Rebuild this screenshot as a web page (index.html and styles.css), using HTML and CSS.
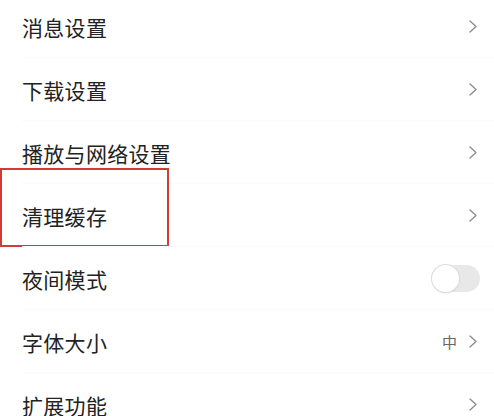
FILE: index.html
```html
<!DOCTYPE html>
<html lang="zh">
<head>
<meta charset="utf-8">
<link rel="stylesheet" href="styles.css">
</head>
<body>
<div class="list">
  <div class="row"><span class="label">消息设置</span><span class="right"><svg class="chev" viewBox="0 0 8 13" width="8" height="13"><path d="M1 1 L7 6.5 L1 12" fill="none" stroke="#8a8a8a" stroke-width="1.3" stroke-linecap="round" stroke-linejoin="round"/></svg></span></div>
  <div class="row"><span class="label">下载设置</span><span class="right"><svg class="chev" viewBox="0 0 8 13" width="8" height="13"><path d="M1 1 L7 6.5 L1 12" fill="none" stroke="#8a8a8a" stroke-width="1.3" stroke-linecap="round" stroke-linejoin="round"/></svg></span></div>
  <div class="row"><span class="label">播放与网络设置</span><span class="right"><svg class="chev" viewBox="0 0 8 13" width="8" height="13"><path d="M1 1 L7 6.5 L1 12" fill="none" stroke="#8a8a8a" stroke-width="1.3" stroke-linecap="round" stroke-linejoin="round"/></svg></span></div>
  <div class="row highlighted"><span class="label">清理缓存</span><span class="right"><svg class="chev" viewBox="0 0 8 13" width="8" height="13"><path d="M1 1 L7 6.5 L1 12" fill="none" stroke="#8a8a8a" stroke-width="1.3" stroke-linecap="round" stroke-linejoin="round"/></svg></span><div class="mark"></div></div>
  <div class="row"><span class="label">夜间模式</span><span class="right"><span class="toggle"><span class="knob"></span></span></span></div>
  <div class="row"><span class="label">字体大小</span><span class="right"><span class="value">中</span><svg class="chev" viewBox="0 0 8 13" width="8" height="13"><path d="M1 1 L7 6.5 L1 12" fill="none" stroke="#8a8a8a" stroke-width="1.3" stroke-linecap="round" stroke-linejoin="round"/></svg></span></div>
  <div class="row last"><span class="label">扩展功能</span><span class="right"><svg class="chev" viewBox="0 0 8 13" width="8" height="13"><path d="M1 1 L7 6.5 L1 12" fill="none" stroke="#8a8a8a" stroke-width="1.3" stroke-linecap="round" stroke-linejoin="round"/></svg></span></div>
</div>
</body>
</html>
```
FILE: styles.css
```css
html, body {
  margin: 0;
  padding: 0;
  background: #ffffff;
  overflow: hidden;
}
body {
  width: 494px;
  height: 416px;
  font-family: "Noto Sans CJK SC", "Noto Sans", sans-serif;
}
.list {
  margin-top: -5px;
}
.row {
  position: relative;
  height: 63px;
  display: flex;
  align-items: center;
  justify-content: space-between;
  padding: 0 17px 0 22px;
  box-sizing: border-box;
}
.row::after {
  content: "";
  position: absolute;
  left: 22px;
  right: 0;
  bottom: 0;
  height: 1px;
  background: #fafafa;
}
.row.last::after {
  display: none;
}
.label {
  font-size: 21px;
  color: #222222;
  letter-spacing: 0.3px;
}
.right {
  display: flex;
  align-items: center;
  gap: 12px;
}
.chev {
  display: block;
}
.value {
  font-size: 15px;
  color: #666666;
}
.toggle {
  display: block;
  position: relative;
  width: 48px;
  height: 27px;
  border-radius: 14px;
  background: #e8e8e8;
  margin-right: -3px;
}
.knob {
  position: absolute;
  left: 0;
  top: 0;
  width: 27px;
  height: 27px;
  border-radius: 50%;
  background: #ffffff;
  box-shadow: 0 0 0 1px #dcdcdc, 0 1px 2px rgba(0,0,0,0.15);
  box-sizing: border-box;
}
.mark {
  position: absolute;
  left: 0;
  top: -16px;
  width: 169px;
  height: 79px;
  border: 2px solid #d43a36;
  box-sizing: border-box;
  pointer-events: none;
}
```
